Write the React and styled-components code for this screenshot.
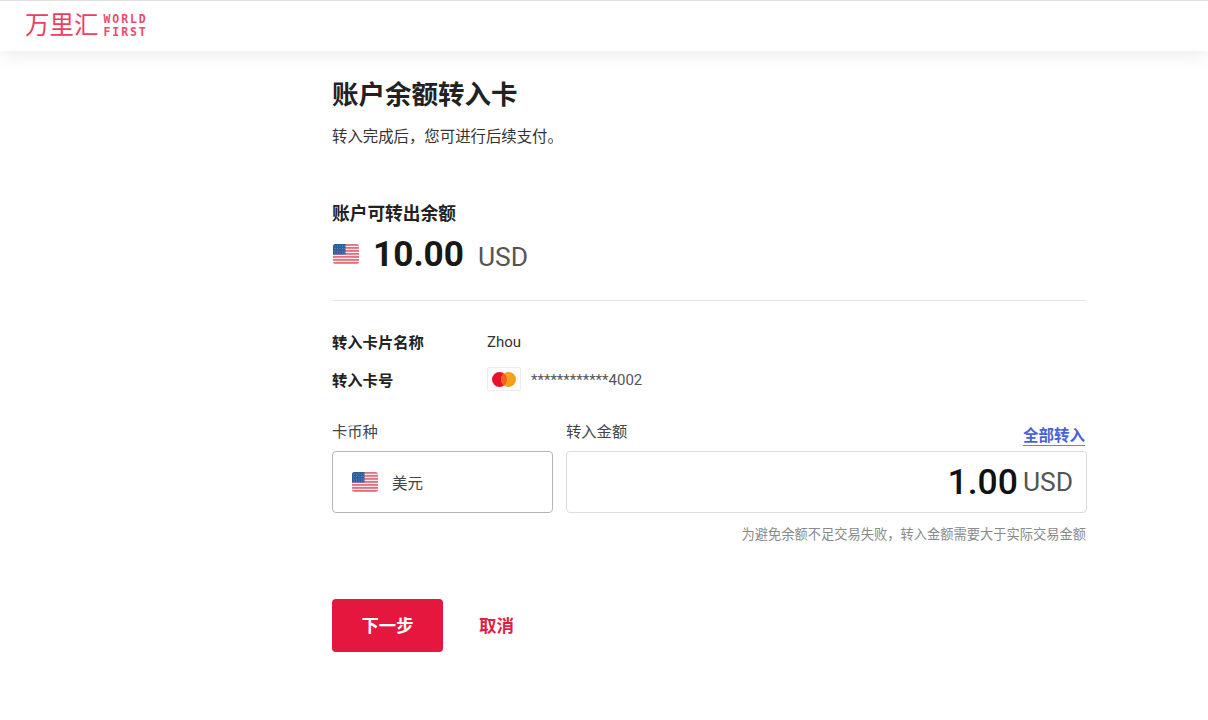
import React from 'react';
import styled, { createGlobalStyle } from 'styled-components';

const GlobalStyle = createGlobalStyle`
  html, body {
    margin: 0;
    padding: 0;
    background: #fff;
    font-family: Roboto, "Noto Sans CJK SC", sans-serif;
    color: #222;
  }
`;

const Header = styled.header`
  height: 50px;
  border-top: 1px solid #e2e2e2;
  background: #fff;
  box-shadow: 0 4px 18px rgba(0, 0, 0, 0.08);
  display: flex;
  align-items: center;
  padding-left: 25px;
  gap: 5px;
`;

const LogoCn = styled.span`
  font-size: 24.5px;
  font-weight: 400;
  line-height: 26px;
  color: #ee3f63;
`;

const LogoEn = styled.span`
  font-family: "DejaVu Sans Mono", monospace;
  font-size: 11.5px;
  font-weight: 700;
  line-height: 13px;
  letter-spacing: 1.9px;
  color: #ee4a6c;
  text-align: center;
`;

const Main = styled.main`
  width: 755px;
  margin-left: 332px;
  display: flex;
  flex-direction: column;
`;

const Title = styled.h1`
  margin: 26px 0 0;
  font-size: 26.5px;
  line-height: 36px;
  font-weight: 700;
  color: #222;
`;

const Subtitle = styled.p`
  margin: 13px 0 0;
  font-size: 15.4px;
  line-height: 22px;
  color: #333;
`;

const BalanceLabel = styled.div`
  margin-top: 54px;
  font-size: 17.7px;
  line-height: 24px;
  font-weight: 700;
  color: #222;
`;

const BalanceRow = styled.div`
  display: flex;
  align-items: center;
  height: 44px;
  margin-top: 6px;
`;

const FlagBox = styled.span`
  display: inline-flex;
  justify-content: center;
  flex: none;
  width: ${p => p.$w}px;
`;

const BalanceValue = styled.span`
  margin-left: 13px;
  font-size: 35.2px;
  font-weight: 700;
  line-height: 44px;
  color: #181818;
`;

const Unit = styled.span`
  font-size: 26.4px;
  font-weight: 400;
  color: #555;
  margin-left: ${p => p.$gap}px;
  padding-top: ${p => p.$drop}px;
`;

const Divider = styled.hr`
  width: 754px;
  margin: 24px 0 0;
  border: 0;
  border-top: 1px solid #e6e6e6;
`;

const InfoList = styled.div`
  margin-top: 21px;
`;

const InfoRow = styled.div`
  display: flex;
  align-items: center;
  height: 38px;
`;

const InfoLabel = styled.span`
  width: 155px;
  font-size: 15.3px;
  font-weight: 700;
  color: #222;
`;

const InfoValue = styled.span`
  padding-top: 1px;
  font-size: 15px;
  color: #333;
`;

const CardBadge = styled.span`
  display: inline-flex;
  align-items: center;
  justify-content: center;
  width: 34px;
  height: 24px;
  margin-right: 10px;
  border: 1px solid #ececec;
  border-radius: 2px;
  box-sizing: border-box;
`;

const CardNumber = styled.span`
  padding-top: 2px;
  font-size: 15px;
  color: #555;
`;

const FormGrid = styled.div`
  display: grid;
  grid-template-columns: 221px 1fr;
  column-gap: 13px;
  margin-top: 22px;
`;

const FieldHead = styled.div`
  display: flex;
  justify-content: space-between;
  align-items: flex-end;
  height: 31px;
  padding-bottom: 8px;
  box-sizing: border-box;
`;

const FieldLabel = styled.span`
  font-size: 15.3px;
  line-height: 22px;
  color: #444;
`;

const TransferAll = styled.a`
  font-size: 15.5px;
  font-weight: 700;
  line-height: 18px;
  color: #4a62d8;
  border-bottom: 1px solid #6d80e2;
  margin-right: 2px;
  margin-bottom: -3px;
  cursor: pointer;
`;

const CurrencyBox = styled.div`
  height: 62px;
  box-sizing: border-box;
  border: 1px solid #b5b5b5;
  border-radius: 4px;
  display: flex;
  align-items: center;
  padding-left: 19px;
  gap: 14px;
  font-size: 15.5px;
  color: #444;
`;

const AmountBox = styled.div`
  height: 62px;
  box-sizing: border-box;
  border: 1px solid #dcdcdc;
  border-radius: 4px;
  display: flex;
  align-items: center;
  justify-content: flex-end;
  padding-right: 13px;
`;

const AmountValue = styled.span`
  font-size: 35.5px;
  font-weight: 500;
  color: #111;
`;

const Hint = styled.p`
  margin: 12px 0 0;
  padding-right: 1px;
  text-align: right;
  font-size: 13.25px;
  line-height: 20px;
  color: #8a8a8a;
`;

const Actions = styled.div`
  display: flex;
  align-items: center;
  gap: 36px;
  margin-top: 54px;
`;

const PrimaryButton = styled.button`
  width: 111px;
  height: 53px;
  padding: 0 0 2px;
  border: 0;
  border-radius: 4px;
  background: #e6173f;
  color: #fff;
  font-family: inherit;
  font-size: 17.3px;
  font-weight: 700;
  cursor: pointer;
`;

const CancelButton = styled.button`
  border: 0;
  padding: 0 0 3px;
  background: none;
  color: #e01f48;
  font-family: inherit;
  font-size: 17.5px;
  font-weight: 700;
  cursor: pointer;
`;

const UsFlag = () => (
  <svg width="26" height="20" viewBox="0 0 26 20">
    <defs>
      <clipPath id="flagEdge">
        <rect width="26" height="20" rx="2.5" />
      </clipPath>
    </defs>
    <g clipPath="url(#flagEdge)">
      <rect width="26" height="20" fill="#f4e9eb" />
      {[0, 3, 6, 9, 12, 15, 18].map(y => (
        <rect key={y} y={y} width="26" height="1.8" fill="#e0717f" />
      ))}
      <rect width="12.5" height="10.5" fill="#2b5c9c" />
      {[2, 4.5, 7, 9].map(y =>
        [2, 4.5, 7, 9.5, 11.2].map(x => (
          <circle key={`${x}-${y}`} cx={x} cy={y} r="0.5" fill="#7f9fc6" />
        ))
      )}
    </g>
  </svg>
);

const MasterCard = () => (
  <svg width="24" height="15" viewBox="0 0 24 15">
    <circle cx="7.5" cy="7.5" r="7.5" fill="#e8112d" />
    <circle cx="16.5" cy="7.5" r="7.5" fill="#f79e1b" />
    <path d="M12 1.5a7.5 7.5 0 0 1 0 12a7.5 7.5 0 0 1 0-12z" fill="#f4611f" />
  </svg>
);

const App = () => (
  <>
    <GlobalStyle />
    <Header>
      <LogoCn>万里汇</LogoCn>
      <LogoEn>WORLD<br />FIRST</LogoEn>
    </Header>
    <Main>
      <Title>账户余额转入卡</Title>
      <Subtitle>转入完成后，您可进行后续支付。</Subtitle>
      <BalanceLabel>账户可转出余额</BalanceLabel>
      <BalanceRow>
        <FlagBox $w={28}><UsFlag /></FlagBox>
        <BalanceValue>10.00</BalanceValue>
        <Unit $gap={14} $drop={6}>USD</Unit>
      </BalanceRow>
      <Divider />
      <InfoList>
        <InfoRow>
          <InfoLabel>转入卡片名称</InfoLabel>
          <InfoValue>Zhou</InfoValue>
        </InfoRow>
        <InfoRow>
          <InfoLabel>转入卡号</InfoLabel>
          <CardBadge><MasterCard /></CardBadge>
          <CardNumber>************4002</CardNumber>
        </InfoRow>
      </InfoList>
      <FormGrid>
        <FieldHead>
          <FieldLabel>卡币种</FieldLabel>
        </FieldHead>
        <FieldHead>
          <FieldLabel>转入金额</FieldLabel>
          <TransferAll>全部转入</TransferAll>
        </FieldHead>
        <CurrencyBox>
          <FlagBox $w={26}><UsFlag /></FlagBox>
          美元
        </CurrencyBox>
        <AmountBox>
          <AmountValue>1.00</AmountValue>
          <Unit $gap={5} $drop={0}>USD</Unit>
        </AmountBox>
      </FormGrid>
      <Hint>为避免余额不足交易失败，转入金额需要大于实际交易金额</Hint>
      <Actions>
        <PrimaryButton>下一步</PrimaryButton>
        <CancelButton>取消</CancelButton>
      </Actions>
    </Main>
  </>
);

export default App;
